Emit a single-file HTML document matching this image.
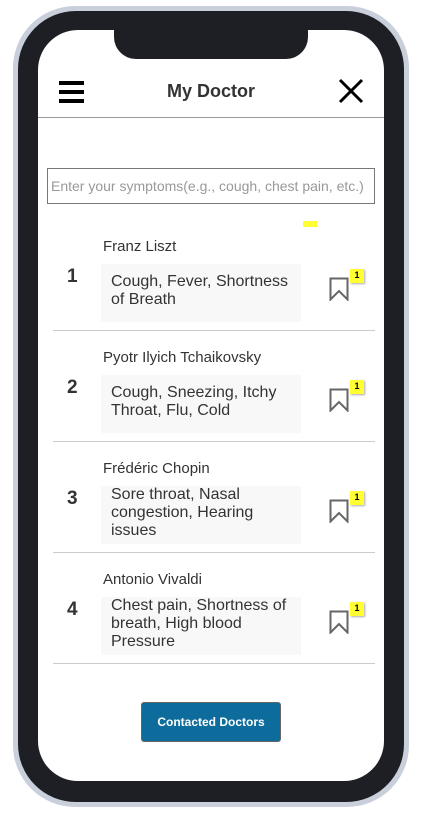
<!DOCTYPE html>
<html><head><meta charset="utf-8"><style>
*{margin:0;padding:0;box-sizing:border-box}
body{width:421px;height:813px;background:#fff;font-family:"Liberation Sans",Arial,sans-serif;position:relative;overflow:hidden}
.outer{position:absolute;left:13px;top:6px;width:396px;height:801px;border-radius:62px;background:#c9d0dc}
.frame{position:absolute;left:18px;top:11px;width:386px;height:791px;border-radius:58px;background:#1e1f24}
.screen{position:absolute;left:38px;top:30px;width:346px;height:751px;border-radius:40px;background:#fff;overflow:hidden}
.notch{position:absolute;left:114px;top:26px;width:194px;height:33px;background:#1e1f24;border-radius:0 0 22px 22px}
.hdr{position:absolute;left:0;top:0;width:346px;height:88px;border-bottom:1px solid #999}
.title{position:absolute;left:0;width:346px;top:51px;text-align:center;font-weight:bold;font-size:18px;color:#333}
.ham{position:absolute;left:21px;top:51px;width:25px}
.ham div{height:4px;background:#000;margin-bottom:5px}
.inp{position:absolute;left:9px;top:138px;width:328px;height:36px;border:1px solid #777;font-size:14px;color:#999;padding:9px 3px;white-space:nowrap}
.row{position:absolute;left:15px;width:322px;height:111px;border-bottom:1px solid #ccc}
.num{position:absolute;left:14px;top:46px;font-size:19px;font-weight:bold;color:#333}
.name{position:absolute;left:50px;top:18px;font-size:15px;color:#333}
.box{position:absolute;left:48px;top:44px;width:200px;height:58px;background:#f8f8f8;font-size:16px;color:#333;padding:0 10px 4px;line-height:18px;display:flex;align-items:center}
.bm{position:absolute;left:276px;top:57px}
.badge{position:absolute;left:297px;top:49px;width:14px;height:14px;background:#ffff33;font-size:9px;font-weight:bold;text-align:center;line-height:13px;box-shadow:1px 1px 2px #aaa}
.btn{position:absolute;left:103px;top:672px;width:140px;height:40px;background:#0e6c9c;color:#fff;font-size:12px;font-weight:bold;border-radius:3px;border:1px solid #666;text-align:center;line-height:38px}
</style></head><body>
<div class="outer"></div><div class="frame"></div>
<div class="screen">
<div class="hdr">
<div class="ham"><div></div><div></div><div></div></div>
<div class="title">My Doctor</div>
<svg style="position:absolute;left:300px;top:48px" width="26" height="26" viewBox="0 0 26 26"><path d="M2 2L24 24M24 2L2 24" stroke="#000" stroke-width="3"/></svg>
</div>
<div class="inp">Enter your symptoms(e.g., cough, chest pain, etc.)</div>
<div style="position:absolute;left:265px;top:191px;width:14px;height:6px;background:#ffff33"></div>
<div class="row" style="top:190px"><div class="num">1</div><div class="name">Franz Liszt</div><div class="box">Cough, Fever, Shortness of Breath</div><svg class="bm" width="20" height="24"><path d="M1.5 1.5H18.5V22.5L10 14L1.5 22.5Z" fill="none" stroke="#666" stroke-width="2"/></svg><div class="badge">1</div></div>
<div class="row" style="top:301px"><div class="num">2</div><div class="name">Pyotr Ilyich Tchaikovsky</div><div class="box">Cough, Sneezing, Itchy Throat, Flu, Cold</div><svg class="bm" width="20" height="24"><path d="M1.5 1.5H18.5V22.5L10 14L1.5 22.5Z" fill="none" stroke="#666" stroke-width="2"/></svg><div class="badge">1</div></div>
<div class="row" style="top:412px"><div class="num">3</div><div class="name">Frédéric Chopin</div><div class="box">Sore throat, Nasal congestion, Hearing issues</div><svg class="bm" width="20" height="24"><path d="M1.5 1.5H18.5V22.5L10 14L1.5 22.5Z" fill="none" stroke="#666" stroke-width="2"/></svg><div class="badge">1</div></div>
<div class="row" style="top:523px"><div class="num">4</div><div class="name">Antonio Vivaldi</div><div class="box">Chest pain, Shortness of breath, High blood Pressure</div><svg class="bm" width="20" height="24"><path d="M1.5 1.5H18.5V22.5L10 14L1.5 22.5Z" fill="none" stroke="#666" stroke-width="2"/></svg><div class="badge">1</div></div>
<div class="btn">Contacted Doctors</div>
</div>
<div class="notch"></div>
</body></html>
